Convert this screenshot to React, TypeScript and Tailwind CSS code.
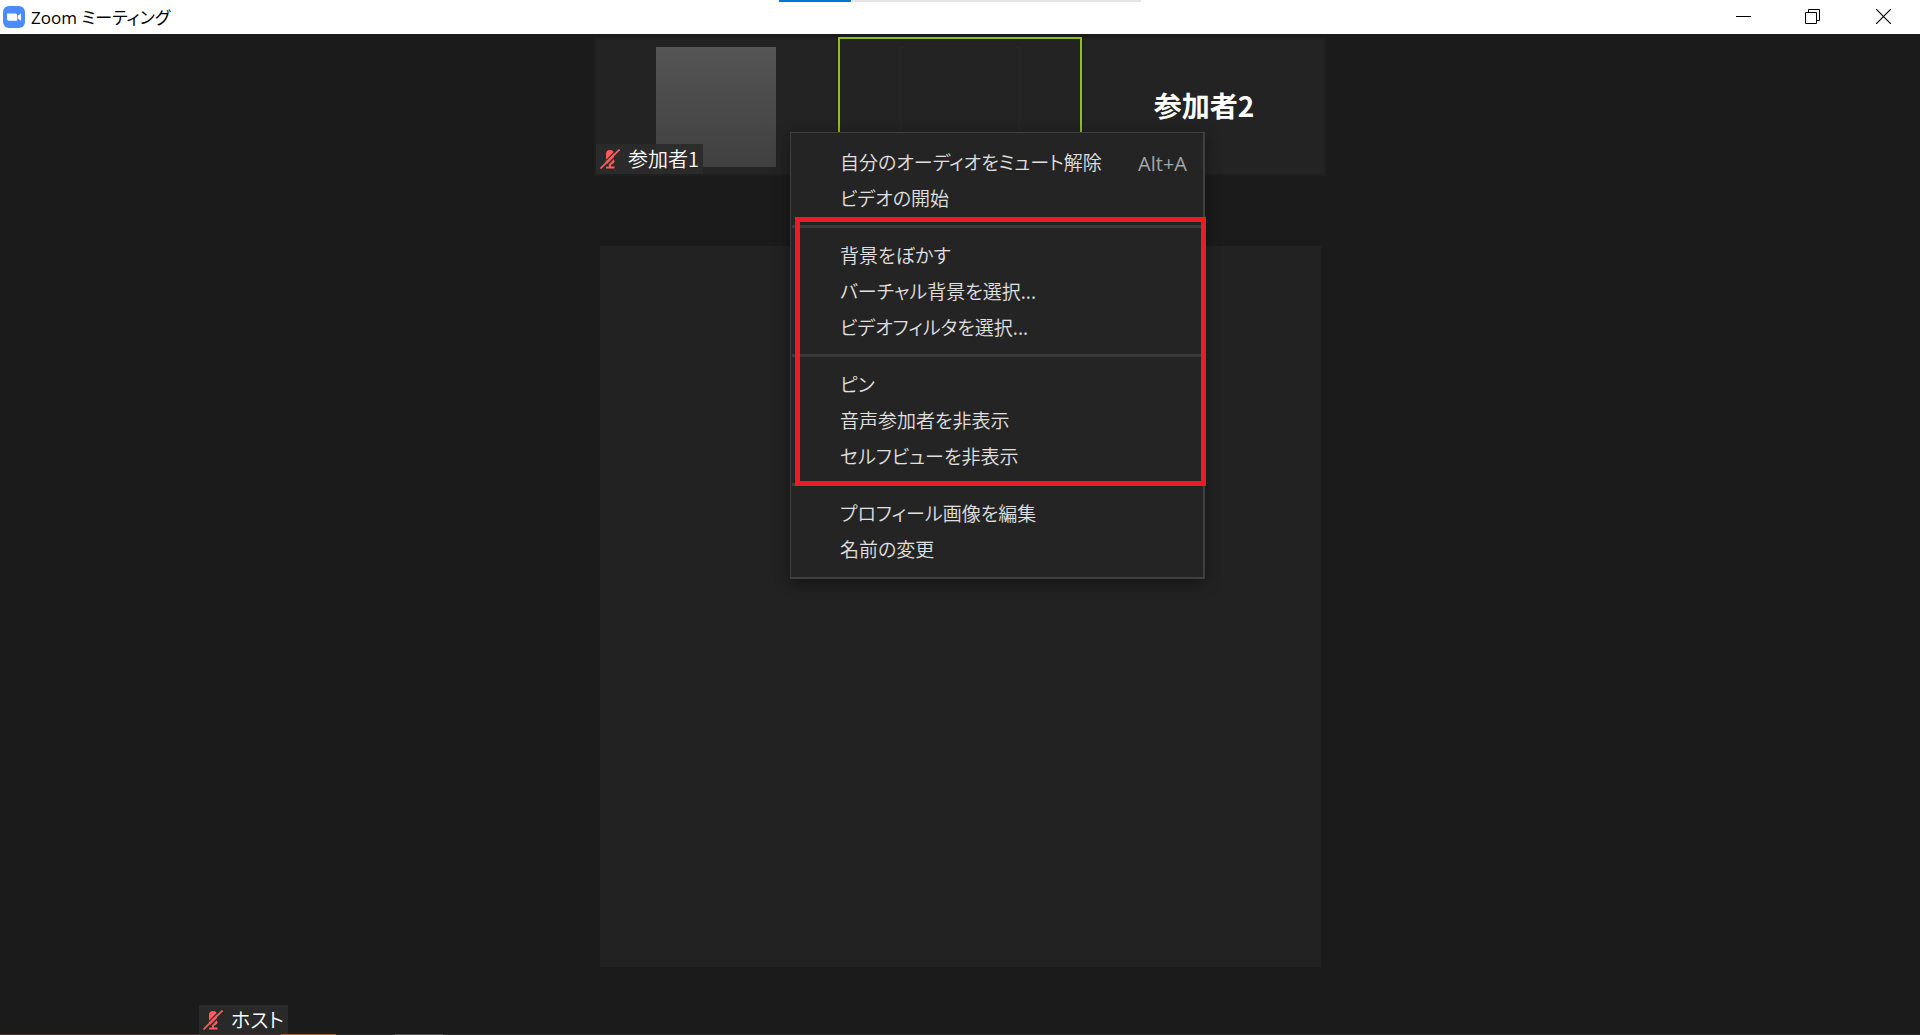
import type { ReactNode } from "react";

interface MenuItem {
  label: string;
  shortcut?: string;
}

const AUDIO_ITEMS: MenuItem[] = [
  { label: "自分のオーディオをミュート解除", shortcut: "Alt+A" },
  { label: "ビデオの開始" },
];

const BACKGROUND_ITEMS: MenuItem[] = [
  { label: "背景をぼかす" },
  { label: "バーチャル背景を選択..." },
  { label: "ビデオフィルタを選択..." },
];

const VIEW_ITEMS: MenuItem[] = [
  { label: "ピン" },
  { label: "音声参加者を非表示" },
  { label: "セルフビューを非表示" },
];

const PROFILE_ITEMS: MenuItem[] = [
  { label: "プロフィール画像を編集" },
  { label: "名前の変更" },
];

function ZoomLogo() {
  return (
    <svg width="22" height="22" viewBox="0 0 22 22" aria-hidden="true">
      <rect width="22" height="22" rx="6" fill="#4a8cff" />
      <path d="M4 7.4h8.2a2 2 0 0 1 2 2v5.4H6a2 2 0 0 1-2-2z" fill="#fff" />
      <path d="M14.8 9.8 18 7.4v7.4l-3.2-2.4z" fill="#fff" />
    </svg>
  );
}

function MutedMic() {
  return (
    <svg width="20" height="20" viewBox="0 0 20 20" aria-hidden="true">
      <rect x="6" y="1" width="8" height="13" rx="4" fill="#ff5b5b" />
      <path d="M6 11.5c.6 2.4 2 3.5 4 3.5s3.4-1.1 4-3.5" fill="none" stroke="#ff5b5b" strokeWidth="1.6" />
      <path d="M10 15v3M6 18.4h8.5" stroke="#ff5b5b" strokeWidth="2" />
      <path d="M-1 18.5 18.5-1" stroke="#2b2b2b" strokeWidth="1.2" />
      <path d="M2 21 21 2" stroke="#2b2b2b" strokeWidth="1.4" />
      <path d="M.5 19.5 19.5.5" stroke="#ff5b5b" strokeWidth="1.8" />
    </svg>
  );
}

function NameTag({ name }: { name: string }) {
  return (
    <div className="flex h-[30px] items-center gap-2 bg-[#2b2b2b]/90 pr-1 pl-1 text-xl leading-none text-white">
      <MutedMic />
      <span>{name}</span>
    </div>
  );
}

function TitleBar() {
  return (
    <header className="relative flex h-[34px] items-center justify-between bg-white text-black">
      <div className="flex items-center gap-1.5 pl-[3px]">
        <ZoomLogo />
        <h1 className="font-['Open_Sans','Noto_Sans_CJK_JP',sans-serif] text-[17px] leading-none font-normal">
          Zoom ミーティング
        </h1>
      </div>
      <div className="flex h-full">
        <button type="button" aria-label="最小化" className="flex w-[69px] items-center justify-center pb-px">
          <svg width="15" height="15" viewBox="0 0 15 15" shapeRendering="crispEdges">
            <path d="M0 7.5h15" stroke="#000" />
          </svg>
        </button>
        <button type="button" aria-label="元に戻す" className="flex w-[69px] items-center justify-center pb-px">
          <svg width="15" height="15" viewBox="0 0 15 15" fill="none" stroke="#000">
            <path d="M.5 3.5h11v11H.5zM3.5 3.5v-3h11v11h-3" />
          </svg>
        </button>
        <button type="button" aria-label="閉じる" className="flex w-[73px] items-center justify-center pb-px">
          <svg width="15" height="15" viewBox="0 0 15 15" stroke="#000" strokeWidth="1.2">
            <path d="M0 0 15 15M15 0 0 15" />
          </svg>
        </button>
      </div>

      {/* Loading strip */}
      <div className="absolute top-0 left-1/2 h-0.5 w-[362px] -translate-x-1/2 bg-[#e5e5e5]">
        <div className="h-full w-1/5 bg-[#0078d7]" />
      </div>
    </header>
  );
}

function Tile({ active, children }: { active?: boolean; children?: ReactNode }) {
  return (
    <div
      className={`relative flex h-[139px] w-[244px] items-center justify-center border-2 bg-[#232323] ${
        active ? "border-[#8ebf22]" : "border-[#1f1f1f]"
      }`}
    >
      {children}
    </div>
  );
}

function MenuGroup({ items }: { items: MenuItem[] }) {
  return (
    <ul className="py-[9px]">
      {items.map((item) => (
        <li key={item.label}>
          <button
            type="button"
            className="flex h-9 w-full items-center justify-between pr-4 pb-0.5 pl-[49px] text-left"
          >
            <span>{item.label}</span>
            {item.shortcut && (
              <kbd className="pt-1.5 font-['Open_Sans',sans-serif] text-xl leading-none font-normal text-[#a6a6a6]">
                {item.shortcut}
              </kbd>
            )}
          </button>
        </li>
      ))}
    </ul>
  );
}

function Separator() {
  return <div className="ml-px h-[3px] bg-[#3a3a3a]" />;
}

function ContextMenu() {
  return (
    <nav className="absolute top-[95px] left-[196px] w-[415px] border-t border-r-2 border-b-2 border-l border-[#404040] bg-[#242424] pt-0.5 pb-px text-[19px] leading-none text-[#e0e0e0] shadow-[0_4px_14px_rgba(0,0,0,0.4)]">
      <MenuGroup items={AUDIO_ITEMS} />
      {/* Background and view groups, outlined in red */}
      <div className="relative">
        <Separator />
        <MenuGroup items={BACKGROUND_ITEMS} />
        <Separator />
        <MenuGroup items={VIEW_ITEMS} />
        <Separator />
        <div className="pointer-events-none absolute -top-2 -right-[3px] bottom-0 left-1 border-5 border-[#ed1c24]" />
      </div>
      <MenuGroup items={PROFILE_ITEMS} />
    </nav>
  );
}

export default function App() {
  return (
    <div className="relative flex min-h-screen flex-col bg-[#1b1b1b] font-['Noto_Sans_CJK_JP',sans-serif] font-[350] [font-feature-settings:'palt']">
      <TitleBar />
      <main className="flex flex-1 flex-col items-center pt-[3px]">
        <div className="relative flex">
          <Tile>
            <div className="size-[120px] bg-linear-to-b from-[#555555] to-[#404040]" />
            <div className="absolute bottom-0 left-0">
              <NameTag name="参加者1" />
            </div>
          </Tile>
          <Tile active>
            <div className="size-[120px] border border-[#272727]" />
          </Tile>
          <Tile>
            <span className="pb-1 text-[28px] leading-none font-bold text-white">参加者2</span>
          </Tile>
          <ContextMenu />
        </div>
        <div className="mt-[70px] aspect-square w-[721px] bg-[#222222]" />
        <div className="mt-auto flex w-full pl-[199px]">
          <NameTag name="ホスト" />
        </div>
      </main>
      {/* Window edge */}
      <div className="absolute inset-x-0 bottom-0 flex h-px bg-[#2d2d2d]">
        <div className="w-[281px] bg-[#4a2f2c]" />
        <div className="w-[55px] bg-[#a8683a]" />
        <div className="ml-[59px] w-12 bg-[#555555]" />
      </div>
    </div>
  );
}
